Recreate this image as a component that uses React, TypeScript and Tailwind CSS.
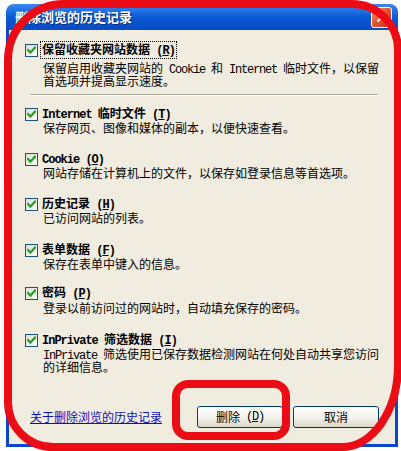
import React from 'react'

const cjk = { fontFamily: '"Noto Sans CJK SC", "Liberation Sans", sans-serif' }

// latin runs: SimSun's half-width look, ~6px per char
const L = ({ children, bold }: { children: React.ReactNode; bold?: boolean }) => (
  <span
    className={`whitespace-pre text-[12px] leading-[13px] ${bold ? 'font-bold tracking-[-1px]' : 'tracking-[-1.2px]'}`}
    style={{ fontFamily: '"Liberation Mono", monospace' }}
  >
    {children}
  </span>
)

const Check = () => (
  <span className="w-[13px] h-[13px] shrink-0 border border-[#1c5180] bg-linear-to-br from-[#dcdcd4] to-white flex items-center justify-center">
    <svg width="9" height="9" viewBox="0 0 9 9">
      <path d="M1 4 L3.4 6.6 L8 1.6" stroke="#21a121" strokeWidth="2.2" fill="none" strokeLinecap="square" />
    </svg>
  </span>
)

type Item = { label: React.ReactNode; desc: React.ReactNode[]; mt: number; dmt?: number; focus?: boolean }

const items: Item[] = [
  {
    label: <>保留收藏夹网站数据<L bold> (<u>R</u>)</L></>,
    desc: [
      <>保留启用收藏夹网站的<L> Cookie </L>和<L> Internet </L>临时文件，以保留</>,
      <>首选项并提高显示速度。</>,
    ],
    mt: 0, dmt: 4, focus: true,
  },
  { label: <><L bold>Internet </L>临时文件<L bold> (<u>T</u>)</L></>, desc: [<>保存网页、图像和媒体的副本，以便快速查看。</>], mt: 11 },
  { label: <><L bold>Cookie (<u>O</u>)</L></>, desc: [<>网站存储在计算机上的文件，以保存如登录信息等首选项。</>], mt: 18 },
  { label: <>历史记录<L bold> (<u>H</u>)</L></>, desc: [<>已访问网站的列表。</>], mt: 18 },
  { label: <>表单数据<L bold> (<u>F</u>)</L></>, desc: [<>保存在表单中键入的信息。</>], mt: 19 },
  { label: <>密码<L bold> (<u>P</u>)</L></>, desc: [<>登录以前访问过的网站时，自动填充保存的密码。</>], mt: 16, dmt: 1 },
  {
    label: <><L bold>InPrivate </L>筛选数据<L bold> (<u>I</u>)</L></>,
    desc: [<><L>InPrivate </L>筛选使用已保存数据检测网站在何处自动共享您访问</>, <>的详细信息。</>],
    mt: 19,
  },
]

const margins: Record<number, string> = { 0: 'mt-0', 11: 'mt-[11px]', 16: 'mt-[16px]', 18: 'mt-[18px]', 19: 'mt-[19px]' }

function Row({ it, idx }: { it: Item; idx: number }) {
  return (
    <div className={margins[it.mt]}>
      <div className="flex items-center h-[14px] gap-[3px]">
        <Check />
        <span className={`text-[12px] font-bold leading-[13px] text-black whitespace-nowrap px-[1px] ${it.focus ? 'outline outline-1 outline-dotted outline-black' : ''}`}>
          {it.label}
        </span>
      </div>
      <div className={`ml-[18px] text-[12px] leading-[13px] text-black ${it.dmt === 4 ? 'mt-[4px]' : it.dmt === 1 ? 'mt-[1px]' : ''}`}>
        {it.desc.map((d, i) => (
          <div key={idx + '-' + i} className="whitespace-nowrap h-[13px]">{d}</div>
        ))}
      </div>
      {idx === 0 && <div className="mt-[7px] ml-[5px] w-[348px] h-[2px] border-t border-[#aca899] bg-white" />}
    </div>
  )
}

const XpButton = ({ children }: { children: React.ReactNode }) => (
  <button className="w-[86px] h-[22px] rounded-[3px] border border-[#003c74] bg-linear-to-b from-white via-[#f4f3ee] to-[#dcd8c8] text-[12px] text-black flex items-center justify-center">
    {children}
  </button>
)

export default function App() {
  return (
    <div className="relative w-[401px] h-[451px] bg-white overflow-hidden" style={cjk}>
      <div className="ml-[6px] pt-[4px] w-[392px]">
        {/* title bar */}
        <div className="h-[26px] rounded-t-[8px] bg-linear-to-b from-[#3a88f0] via-[#0a5ad6] to-[#084cc0] flex items-center justify-between pl-[9px] pr-[6px]">
          <span className="text-white text-[13px] font-bold [text-shadow:1px_1px_#0a2a80]">删除浏览的历史记录</span>
          <span className="w-[21px] h-[21px] rounded-[3px] border border-white bg-linear-to-br from-[#f0926e] via-[#e0522e] to-[#c23c1c] flex items-center justify-center">
            <svg width="11" height="11" viewBox="0 0 11 11">
              <path d="M1.5 1.5 L9.5 9.5 M9.5 1.5 L1.5 9.5" stroke="white" strokeWidth="2" />
            </svg>
          </span>
        </div>
        {/* client */}
        <div className="h-[417px] bg-[#f1ece0] border-x-[3px] border-b-[3px] border-[#0a46d2] flex flex-col">
          <div className="pt-[13px] pl-[16px]">
            {items.map((it, i) => (
              <Row key={i} it={it} idx={i} />
            ))}
          </div>
          <div className="mt-auto mb-[16px] flex items-center pl-[21px] pr-[16px]">
            <a className="text-[12px] text-[#1010b8] underline whitespace-nowrap">关于删除浏览的历史记录</a>
            <div className="ml-auto flex gap-[10px]">
              <XpButton>删除<L> (<u>D</u>)</L></XpButton>
              <XpButton>取消</XpButton>
            </div>
          </div>
        </div>
      </div>

      {/* red hand-drawn annotations */}
      <svg className="absolute inset-0 pointer-events-none" width="401" height="451" viewBox="0 0 401 451">
        <path
          d="M 8 60 A 56 56 0 0 1 64 4 L 352 4 A 46 46 0 0 1 398 50 L 398 365 A 56 82 0 0 1 342 447 L 53 447 A 45 45 0 0 1 8 402 Z"
          fill="none"
          stroke="#ec0c16"
          strokeWidth="8"
        />
        <rect x="176" y="384" width="110" height="52" rx="12" fill="none" stroke="#ec0c16" strokeWidth="8" />
      </svg>
    </div>
  )
}
